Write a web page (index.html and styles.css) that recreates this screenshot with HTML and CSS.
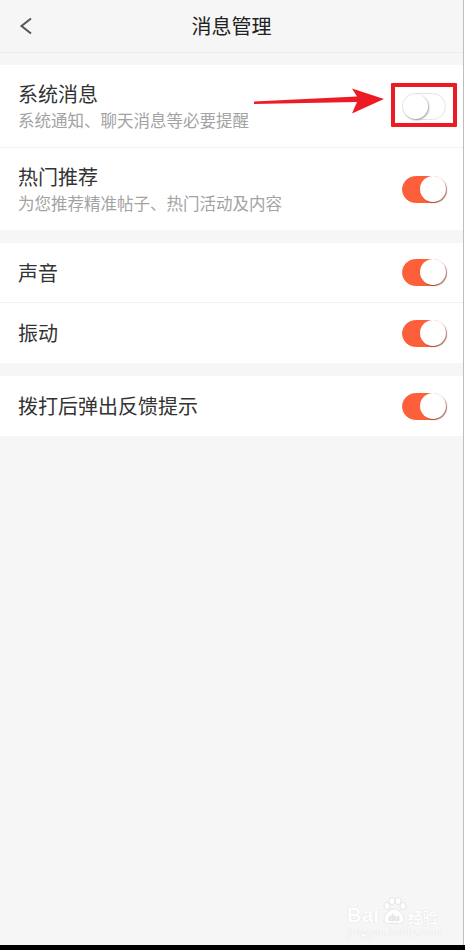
FILE: index.html
```html
<!DOCTYPE html>
<html lang="zh-CN">
<head>
    <meta charset="UTF-8">
    <meta name="viewport" content="width=device-width, initial-scale=1.0">
    <title>消息管理</title>
    <link rel="stylesheet" href="styles.css">
</head>
<body>
<div class="page">
    <div class="header">
        <svg class="back" width="14" height="18" viewBox="0 0 14 18">
            <polyline points="12,1.5 2.5,9 12,16.5" fill="none" stroke="#555" stroke-width="2"/>
        </svg>
        <div class="title">消息管理</div>
    </div>

    <div class="section">
        <div class="row tall">
            <div class="text">
                <div class="name">系统消息</div>
                <div class="desc">系统通知、聊天消息等必要提醒</div>
            </div>
            <div class="switch"></div>
        </div>
        <div class="row tall">
            <div class="text">
                <div class="name">热门推荐</div>
                <div class="desc">为您推荐精准帖子、热门活动及内容</div>
            </div>
            <div class="switch on"></div>
        </div>
    </div>

    <div class="section">
        <div class="row">
            <div class="name">声音</div>
            <div class="switch on"></div>
        </div>
        <div class="row">
            <div class="name">振动</div>
            <div class="switch on"></div>
        </div>
    </div>

    <div class="section">
        <div class="row">
            <div class="name">拨打后弹出反馈提示</div>
            <div class="switch on"></div>
        </div>
    </div>

    <!-- annotation drawn over the screenshot -->
    <div class="mark-box"></div>
    <svg class="mark-arrow" width="140" height="40" viewBox="250 80 140 40">
        <polygon points="254,101.5 357,96.5 352,88.5 384,99 352,113.5 357,102 254,104" fill="#ed1c24"/>
    </svg>

    <div class="watermark">
        <div class="wm-top">
            <span class="wm-bai">Bai</span>
            <svg class="wm-paw" width="26" height="28" viewBox="0 0 26 28">
                <ellipse cx="6" cy="9" rx="3" ry="3.6"/>
                <ellipse cx="11" cy="4" rx="3" ry="3.6"/>
                <ellipse cx="17" cy="4" rx="3" ry="3.6"/>
                <ellipse cx="22" cy="9" rx="3" ry="3.6"/>
                <path d="M13 12 C7 12 3 19 3 23 C3 27 8 27 13 26 C18 27 23 27 23 23 C23 19 19 12 13 12Z"/>
                <text x="13" y="24" text-anchor="middle" class="wm-du">du</text>
            </svg>
            <span class="wm-jy">经验</span>
        </div>
        <div class="wm-url">jingyan.baidu.com</div>
    </div>
</div>
<div class="bottom-bar"></div>
</body>
</html>
```

FILE: styles.css
```css
body {
    margin: 0;
    background-color: #fff;
    font-family: "Noto Sans CJK SC", "Noto Sans", sans-serif;
    color: #333;
}
.page {
    position: relative;
    width: 463px;
    height: 945px;
    background-color: #f6f6f6;
    border-right: 1px solid #bdbdbd;
    overflow: hidden;
}
.header {
    position: relative;
    height: 52px;
    border-bottom: 1px solid #ececec;
    display: flex;
    align-items: center;
    justify-content: center;
}
.back {
    position: absolute;
    left: 19px;
    top: 17px;
}
.title {
    font-size: 20px;
    line-height: 26px;
    color: #222;
}
.section {
    margin-top: 12px;
    background-color: #fff;
}
.section + .section {
    margin-top: 13px;
}
.row {
    height: 60px;
    box-sizing: border-box;
    padding: 0 17px 0 18px;
    display: flex;
    align-items: center;
    justify-content: space-between;
    border-bottom: 1px solid #f1f1f1;
}
.row:last-child {
    border-bottom: none;
}
.row.tall {
    height: 83px;
}
.row.tall:last-child {
    height: 82px;
}
.name {
    font-size: 20px;
    line-height: 24px;
    color: #333;
}
.desc {
    margin-top: 3px;
    font-size: 16.5px;
    line-height: 22px;
    color: #a3a3a3;
}
.switch {
    position: relative;
    width: 44px;
    height: 27px;
    box-sizing: border-box;
    border-radius: 14px;
    background-color: #fff;
    border: 1px solid #e4e4e4;
    flex-shrink: 0;
}
.switch::after {
    content: "";
    position: absolute;
    top: 0;
    left: 0;
    width: 25px;
    height: 25px;
    border-radius: 50%;
    background-color: #fff;
    box-shadow: 1px 1px 2px rgba(0, 0, 0, 0.35);
}
.switch.on {
    background-color: #fd5f3a;
    border-color: #fd5f3a;
}
.switch.on::after {
    left: auto;
    right: -1px;
    top: -1px;
    width: 26px;
    height: 26px;
    box-shadow: 1px 1px 1px rgba(120, 40, 20, 0.6);
}
.mark-box {
    position: absolute;
    left: 391px;
    top: 83px;
    width: 66px;
    height: 44px;
    box-sizing: border-box;
    border: 4px solid #ed1c24;
    border-radius: 1px;
}
.mark-arrow {
    position: absolute;
    left: 250px;
    top: 80px;
}
.watermark {
    position: absolute;
    left: 347px;
    top: 896px;
    color: #fff;
    text-shadow: 0 0 1px #cfcfcf;
}
.wm-top {
    display: flex;
    align-items: flex-end;
    height: 29px;
}
.wm-bai {
    font-family: "Liberation Sans", Arial, sans-serif;
    font-weight: bold;
    font-size: 20px;
    line-height: 20px;
    letter-spacing: 0.5px;
}
.wm-paw {
    fill: #fff;
    stroke: #d6d6d6;
    stroke-width: 0.6;
    margin: 0 1px 0 1px;
}
.wm-du {
    font-family: "Liberation Sans", Arial, sans-serif;
    font-weight: bold;
    font-size: 9px;
    fill: #e8e8e8;
    stroke: none;
}
.wm-jy {
    font-size: 15px;
    line-height: 17px;
    font-weight: bold;
}
.wm-url {
    font-family: "Liberation Serif", serif;
    font-size: 12px;
    line-height: 13px;
    margin-top: 1px;
    letter-spacing: 0.3px;
}
.bottom-bar {
    height: 5px;
    background-color: #000;
}
```
